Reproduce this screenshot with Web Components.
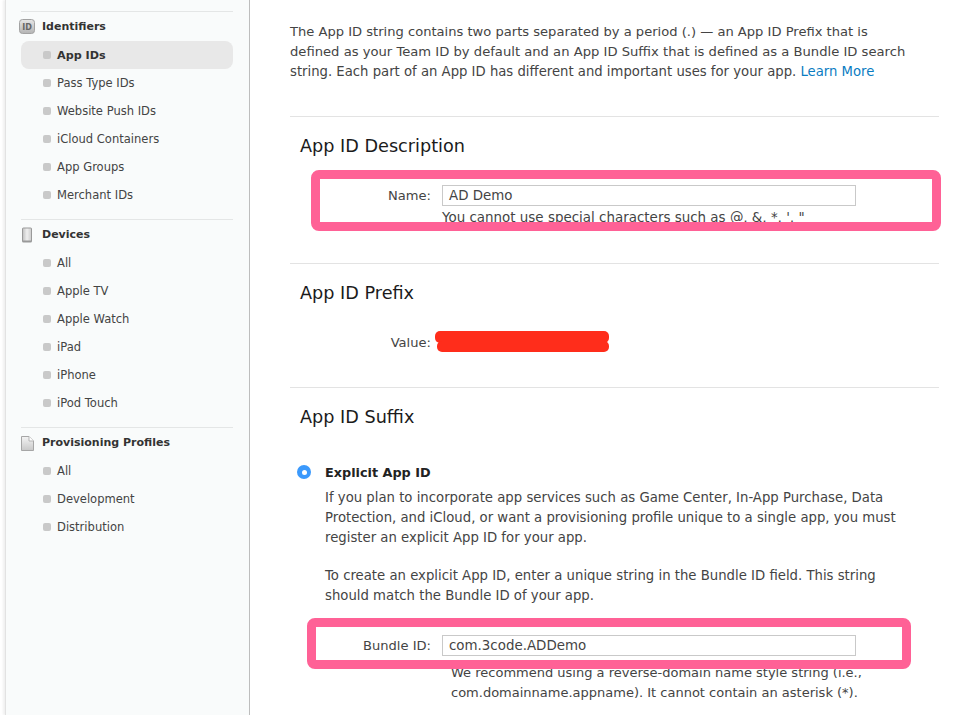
<!doctype html>
<html lang="en"><head><meta charset="utf-8"><title>App ID</title>
<style>
html,body{margin:0;height:715px;overflow:hidden;background:#fff}
body{font-family:"DejaVu Sans",sans-serif;font-size:13.09px;color:#333}
</style></head><body>
<app-shell>
  <side-nav slot="nav">
    <nav-group label="Identifiers" first>
      <svg slot="icon" width="16" height="16" viewBox="0 0 16 16"><defs><linearGradient id="b" x1="0" y1="0" x2="0" y2="1"><stop offset="0" stop-color="#e6e6e6"/><stop offset="1" stop-color="#b4b4b4"/></linearGradient></defs><rect x=".5" y=".5" width="15" height="14" rx="3" fill="url(#b)" stroke="#a2a2a2"/><text x="8" y="10.8" text-anchor="middle" font-family="DejaVu Sans" font-size="8" fill="#666">ID</text></svg>
      <nav-item selected>App IDs</nav-item>
      <nav-item>Pass Type IDs</nav-item>
      <nav-item>Website Push IDs</nav-item>
      <nav-item>iCloud Containers</nav-item>
      <nav-item>App Groups</nav-item>
      <nav-item>Merchant IDs</nav-item>
    </nav-group>
    <nav-group label="Devices">
      <svg slot="icon" width="16" height="16" viewBox="0 0 16 16"><defs><linearGradient id="d" x1="0" y1="0" x2="1" y2="0"><stop offset="0" stop-color="#c4c4c4"/><stop offset=".5" stop-color="#efefef"/><stop offset="1" stop-color="#cfcfcf"/></linearGradient></defs><rect x="3" y=".5" width="10" height="15" rx="1.5" fill="#999"/><rect x="4" y="1.5" width="8" height="12" fill="url(#d)"/></svg>
      <nav-item>All</nav-item>
      <nav-item>Apple TV</nav-item>
      <nav-item>Apple Watch</nav-item>
      <nav-item>iPad</nav-item>
      <nav-item>iPhone</nav-item>
      <nav-item>iPod Touch</nav-item>
    </nav-group>
    <nav-group label="Provisioning Profiles">
      <svg slot="icon" width="16" height="16" viewBox="0 0 16 16"><defs><linearGradient id="p" x1="0" y1="0" x2="0" y2="1"><stop offset="0" stop-color="#f4f4f4"/><stop offset="1" stop-color="#c8c8c8"/></linearGradient></defs><path d="M2.5 1.5H10L14.5 6V15.5H2.5Z" fill="url(#p)" stroke="#a6a6a6"/><path d="M10 1.5V6H14.5" fill="#fff" stroke="#b5b5b5"/></svg>
      <nav-item>All</nav-item>
      <nav-item>Development</nav-item>
      <nav-item>Distribution</nav-item>
    </nav-group>
  </side-nav>

  <intro-text>The App ID string contains two parts separated by a period (.) — an App ID Prefix that is<br><span style="font-size:13.15px">defined as your Team ID by default and an App ID Suffix that is defined as a Bundle ID search</span><br><span style="font-size:13.22px">string. Each part of an App ID has different and important uses for your app. <a href="#" style="color:#0a7cc2;text-decoration:none">Learn More</a></span></intro-text>

  <form-section heading="App ID Description" pad="35">
    <field-row label="Name:" value="AD Demo" gap="28" hint-gap="2" hint-size="13.45">
      You cannot use special characters such as @, &amp;, *, ', "
      <pink-box slot="overlay" style="left:21px;top:-15px;width:630px;height:61px"></pink-box>
    </field-row>
  </form-section>

  <form-section heading="App ID Prefix" pad="34">
    <field-row label="Value:" gap="28">
      <red-scribble slot="overlay" style="left:145px;top:-1px"></red-scribble>
    </field-row>
  </form-section>

  <form-section heading="App ID Suffix" pad="0">
    <radio-option title="Explicit App ID">
      <p>If you plan to incorporate app services such as Game Center, In-App Purchase, Data<br>Protection, and iCloud, or want a provisioning profile unique to a single app, you must<br>register an explicit App ID for your app.</p>
      <p>To create an explicit App ID, enter a unique string in the Bundle ID field. This string<br>should match the Bundle ID of your app.</p>
    </radio-option>
    <field-row label="Bundle ID:" value="com.3code.ADDemo" gap="30" hint-gap="7" hint-indent="9" hint-size="13">
      We recommend using a reverse-domain name style string (i.e.,<br>com.domainname.appname). It cannot contain an asterisk (*).
      <pink-box slot="overlay" style="left:17px;top:-17px;width:604px;height:51px"></pink-box>
    </field-row>
  </form-section>
</app-shell>

<script>
const def=(name,css,html)=>{
  customElements.define(name,class extends HTMLElement{
    constructor(){super();const r=this.attachShadow({mode:'open'});
      r.innerHTML=`<style>${css}</style>${typeof html==='function'?html(this):html}`;}
  });
};
def('app-shell',`
  :host{display:grid;grid-template-columns:250px 1fr;height:715px}
  .main{padding:22px 38px 0 40px;min-width:0}
`,`<slot name="nav"></slot><div class="main"><slot></slot></div>`);
def('side-nav',`
  :host{display:block;box-sizing:border-box;margin-left:5px;width:245px;height:715px;padding:11px 16px 0 15px;
    background:#f9fbfb;border-left:1px solid #e2e2e2;border-right:1px solid #bdbdbd;
    box-shadow:-2px 0 2px #f0f0f0}
`,`<slot></slot>`);
def('nav-group',`
  :host{display:block;border-top:1px solid #e4e6e6;padding-bottom:10px;color:#333}
  .head{display:flex;align-items:center;height:29px;gap:7px;font-weight:700;font-size:11px;box-sizing:border-box}
  .ico{display:block;width:16px;height:16px;margin-left:-2px;line-height:0}
`,h=>`<div class="head"><span class="ico"><slot name="icon"></slot></span><span>${h.getAttribute('label')}</span></div><slot></slot>`);
def('nav-item',`
  :host{display:flex;align-items:center;height:28px;gap:6px;padding-left:22px;font-size:11.54px;color:#444;border-radius:8px}
  :host([selected]){background:#e8e8e8;font-weight:700;color:#333;font-size:11.2px}
  i{display:block;width:8px;height:8px;border-radius:2px;background:#c9c9c9;flex:none}
`,`<i></i><span><slot></slot></span>`);
def('intro-text',`
  :host{display:block;line-height:20px;color:#444;height:94px;white-space:nowrap}
`,`<slot></slot>`);
def('form-section',`
  :host{display:block;border-top:1px solid #e3e3e3}
  h2{margin:0;padding:18px 0 0 10px;height:22px;font:400 17.65px/22px "DejaVu Sans",sans-serif;color:#1b1b1b}
`,h=>`<h2>${h.getAttribute('heading')}</h2><div style="padding-bottom:${h.getAttribute('pad')}px"><slot></slot></div>`);
def('field-row',`
  :host{display:block;color:#444}
  .row{position:relative;display:grid;grid-template-columns:141px 414px;column-gap:11px;line-height:20px}
  .label{text-align:right;line-height:20px;padding-top:1px}
  .input{box-sizing:border-box;height:21px;border:1px solid #c9c9c9;padding-left:6px;line-height:20px;background:#fff;font-size:13.4px}
  .ph{height:21px}
  .hint{grid-column:2;line-height:20px;min-height:20px;white-space:nowrap}
`,h=>{
  const v=h.getAttribute('value');
  const g=h.getAttribute('gap'),hg=h.getAttribute('hint-gap')||1,ind=h.getAttribute('hint-indent')||0,sz=h.getAttribute('hint-size')||13.09;
  return `<div class="row" style="margin-top:${g}px">
    <div class="label">${h.getAttribute('label')}</div>
    ${v?`<div class="input">${v}</div><div class="hint" style="margin-top:${hg}px;padding-left:${ind}px;font-size:${sz}px"><slot></slot></div>`:'<div class="ph"><slot></slot></div>'}
    <slot name="overlay"></slot></div>`;
});
def('pink-box',`
  :host{display:block;position:absolute;box-sizing:border-box;border:9px solid #ff6196;border-radius:8px;z-index:2}
`,``);
def('red-scribble',`
  :host{display:block;position:absolute;width:175px;height:22px;line-height:0;z-index:2}
`,`<svg width="175" height="22" viewBox="0 0 175 22"><rect x="0" y="0" width="174" height="12" rx="5" fill="#ff2d1b"/><rect x="2" y="10" width="172" height="11" rx="5" fill="#ff2d1b"/></svg>`);
def('radio-option',`
  :host{display:grid;grid-template-columns:14px 1fr;column-gap:14px;padding:34px 0 0 7px;line-height:20px;color:#444;font-size:13.25px;white-space:nowrap}
  .r{width:14px;height:14px;border-radius:50%;background:#3b99fc;margin-top:3px;display:flex;align-items:center;justify-content:center}
  .r::after{content:"";width:5px;height:5px;border-radius:50%;background:#fff}
  .t{font-weight:700;font-size:12.8px;color:#222;height:19px;padding-top:1px}
  .b{grid-column:2;margin-top:6px;margin-bottom:-19px}
  ::slotted(p){margin:0 0 18px}
`,h=>`<span class="r"></span><div class="t">${h.getAttribute('title')}</div><div class="b"><slot></slot></div>`);
</script>
</body></html>
